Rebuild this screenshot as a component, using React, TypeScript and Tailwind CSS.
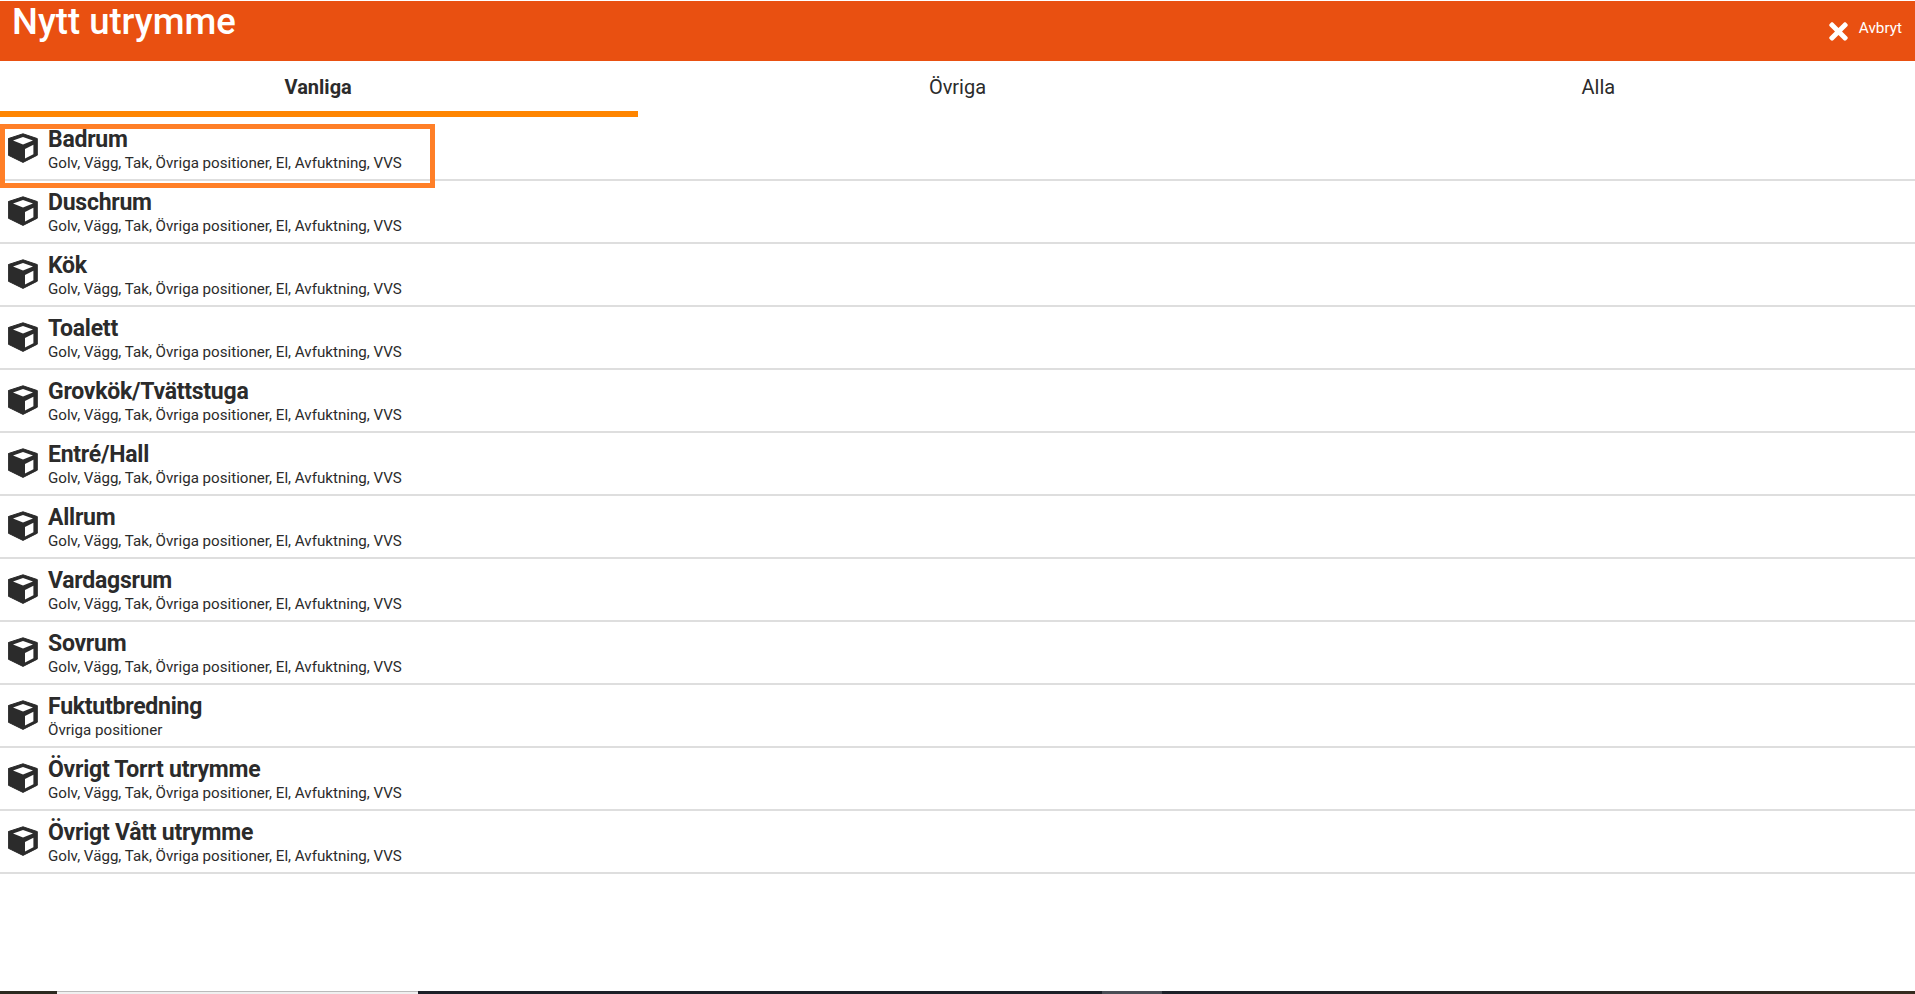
import { FaTimes } from 'react-icons/fa';

const ALL = 'Golv, Vägg, Tak, Övriga positioner, El, Avfuktning, VVS';

const rooms = [
  { name: 'Badrum', sub: ALL },
  { name: 'Duschrum', sub: ALL },
  { name: 'Kök', sub: ALL },
  { name: 'Toalett', sub: ALL },
  { name: 'Grovkök/Tvättstuga', sub: ALL },
  { name: 'Entré/Hall', sub: ALL },
  { name: 'Allrum', sub: ALL },
  { name: 'Vardagsrum', sub: ALL },
  { name: 'Sovrum', sub: ALL },
  { name: 'Fuktutbredning', sub: 'Övriga positioner' },
  { name: 'Övrigt Torrt utrymme', sub: ALL },
  { name: 'Övrigt Vått utrymme', sub: ALL },
];

const CubeIcon = () => (
  <svg viewBox="0 0 30 30" className="mt-[15px] h-[30px] w-[30px] shrink-0">
    <path
      fill="currentColor"
      stroke="currentColor"
      strokeWidth="1"
      strokeLinejoin="round"
      d="M15 .8 L29.3 5.6 V22.2 L15 29.4 L.3 22.2 V5.6 Z"
    />
    <path fill="#ffffff" d="M15 4 L5 7.6 L15 11.4 L25 7.6 Z M17 16 V25.6 L25.4 21.2 V11.8 Z" />
  </svg>
);

const App = () => {
  return (
    <div className="relative flex h-[994px] flex-col overflow-hidden bg-white font-['Roboto',sans-serif] text-[#2b2b2b]">
      <header className="mt-px flex h-[60px] shrink-0 justify-between bg-[#e95011] text-white">
        <h1 className="pt-px pl-3 text-[36.5px] leading-[40px] font-medium">Nytt utrymme</h1>
        <div className="flex h-[57px] items-center gap-[7px] pr-[13px]">
          <FaTimes className="mt-[4px] text-[27px]" />
          <span className="mb-[3px] text-[15.3px]">Avbryt</span>
        </div>
      </header>

      <nav className="grid h-[56px] shrink-0 grid-cols-3 text-center text-xl">
        <div className="border-b-[6px] border-[#ff8500] pt-[14px] pr-[2px] leading-[24px] font-bold">Vanliga</div>
        <div className="pt-[14px] leading-[24px]">Övriga</div>
        <div className="pt-[14px] pl-[5px] leading-[24px]">Alla</div>
      </nav>

      <ul className="mt-px">
        {rooms.map((room) => (
          <li key={room.name} className="flex h-[63px] items-start border-b-2 border-[#dedede] pl-2">
            <CubeIcon />
            <div className="pt-[8px] pl-[10px]">
              <div className="text-[23px] leading-[28px] font-bold tracking-[-0.25px]">{room.name}</div>
              <div className="text-[15.13px] leading-[18px]">{room.sub}</div>
            </div>
          </li>
        ))}
      </ul>

      <div className="pointer-events-none absolute top-[124px] left-0 h-[64px] w-[435px] border-[5px] border-[#ff7f27]" />

      <div className="absolute right-0 bottom-0 left-0 flex h-[3px]">
        <div className="w-[57px] bg-[#2b2a20]" />
        <div className="w-[361px] border-t border-[#bbbbbb] bg-[#f0f0f0]" />
        <div className="w-[684px] bg-[#1c2028]" />
        <div className="w-[60px] bg-[#4a4d55]" />
        <div className="flex-1 bg-gradient-to-r from-[#1c2028] to-[#352c20]" />
      </div>
    </div>
  );
};

export default App;
